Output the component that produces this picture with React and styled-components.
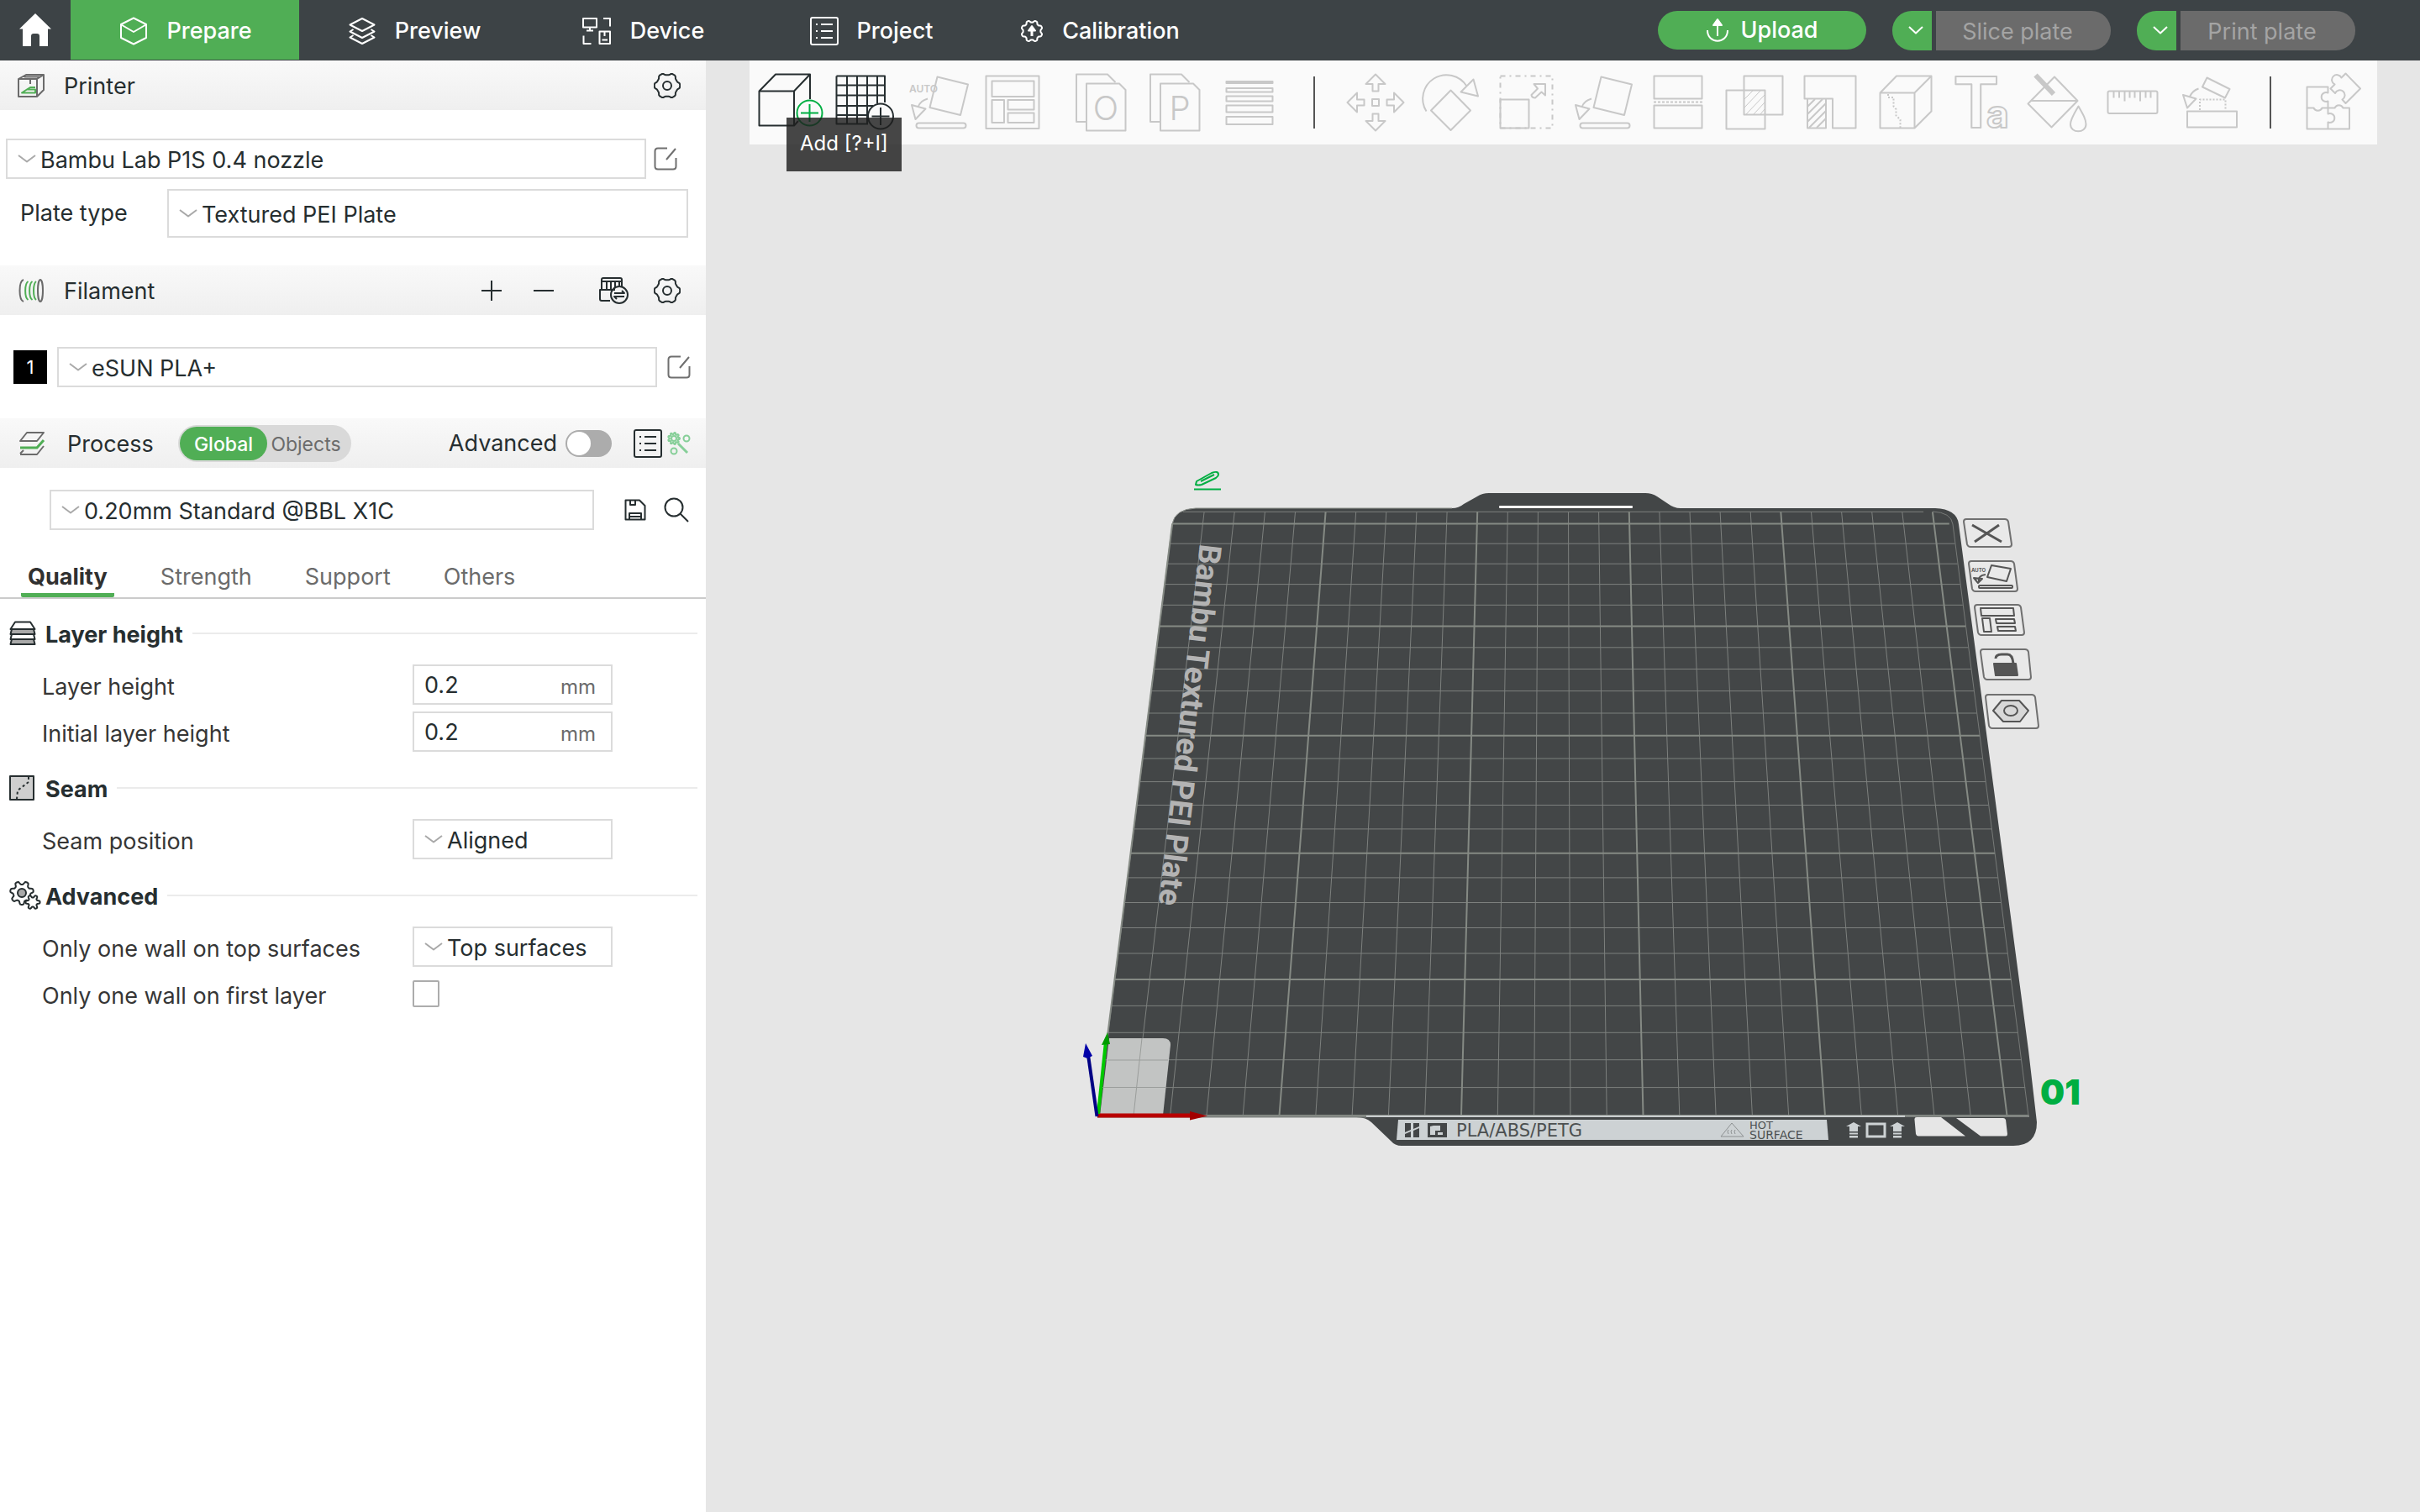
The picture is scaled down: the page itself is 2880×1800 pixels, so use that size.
import React, { useState } from 'react'
import styled, { createGlobalStyle } from 'styled-components'

const GREEN = '#50ae55'
const BRAND = '#00ae42'
const INK = '#262e30'

const gear = (cx, cy, r, depth, lobes, phase = 0) => {
  const points = []
  for (let i = 0; i < 96; i++) {
    const a = (i / 96) * Math.PI * 2
    const wave = Math.tanh(Math.cos(lobes * a + phase) * 2)
    const rr = r + depth * wave
    points.push(`${(cx + rr * Math.cos(a)).toFixed(1)} ${(cy + rr * Math.sin(a)).toFixed(1)}`)
  }
  return `M${points.join('L')}Z`
}

/* ---------- header icons ---------- */

const HomeIcon = () => (
  <svg width="38" height="40" viewBox="0 0 38 40" fill="#fff">
    <path d="M19 0L38 18.5H34V39H24V27q0-3-3-3h-4q-3 0-3 3V39H4V18.5H0Z" />
  </svg>
)
const PrepareIcon = () => (
  <Line width="34" height="34" viewBox="0 0 34 34">
    <path d="M17 1.5L32 9V25L17 32.5L2 25V9Z" />
    <path d="M2.5 9.5L17 18L31.5 9.5" />
  </Line>
)
const PreviewIcon = () => (
  <Line width="34" height="34" viewBox="0 0 34 34">
    <path d="M17 2L31.5 9.5L17 17L2.5 9.5Z" />
    <path d="M6.5 15L2.5 17.5L17 25L31.5 17.5L27.5 15M6.5 22L2.5 24.5L17 32L31.5 24.5L27.5 22" />
  </Line>
)
const DeviceIcon = () => (
  <Line width="36" height="34" viewBox="0 0 36 34">
    <path d="M2 2H18V12.5H2ZM10 12.5V16M6 16.5H14M26 2H34V11.5M2.5 22.5V32H11.5" />
    <path d="M21.5 17.5H34V32H21.5ZM27.5 18V23M24.5 27.5H31" />
  </Line>
)
const ProjectIcon = ({ color }) => (
  <Line width="34" height="34" viewBox="0 0 34 34" color={color}>
    <rect x="1" y="1" width="32" height="32" rx="2" />
    <path d="M7 9H9M7 17H9M7 25H9M13 9H27M13 17H27M13 25H27" />
  </Line>
)
const CalibrationIcon = () => (
  <Line width="28" height="28" viewBox="0 0 28 28">
    <path d={gear(14, 14, 11.5, 1.2, 8, Math.PI)} />
    <path d="M14 8L18 13.5H10Z" fill="#fff" />
    <path d="M14 12V20" strokeWidth="3" />
  </Line>
)
const UploadIcon = () => (
  <Line width="28" height="30" viewBox="0 0 28 30">
    <path d="M14 4V22M2 15C2 32 26 32 26 15" />
    <path d="M14 2L19 9H9Z" fill="#fff" />
  </Line>
)
const SmallChevron = () => (
  <Line width="20" height="12" viewBox="0 0 20 12">
    <path d="M2 2L10 9.5L18 2" />
  </Line>
)

/* ---------- sidebar icons ---------- */

const PrinterIcon = () => (
  <Line width="34" height="30" viewBox="0 0 34 30" color="#6b6b6b">
    <path d="M2 7H24V28H2ZM2 7L11 2H32L24 7M32 2V20L24 28M16 7V13M9 4.5H28" />
    <path d="M6 23.5L12 19.5H22V23.5ZM12 19.5L16 17H22" stroke={GREEN} />
  </Line>
)
const FilamentIcon = () => (
  <Line width="32" height="30" viewBox="-2 0 32 30" color="#6b6b6b">
    <ellipse cx="26" cy="15" rx="3" ry="13" />
    <path d="M6 2C0 4 0 26 6 28" />
    <path d="M11.5 4C7 7 7 23 11.5 26M16.5 4C12 7 12 23 16.5 26M21 4C17 7 17 23 21 26" stroke={GREEN} />
  </Line>
)
const ProcessIcon = () => (
  <Line width="34" height="30" viewBox="-2 0 34 30" color="#6b6b6b">
    <path d="M10 2H30L22 12H2Z" />
    <path d="M2 20H22L30 11" stroke={GREEN} strokeWidth="3" />
    <path d="M2 28H22L30 18M2 27L6 23" />
  </Line>
)
const SettingsIcon = () => (
  <Line width="32" height="32" viewBox="0 0 32 32" color={INK}>
    <path d={gear(16, 16, 14, 1.3, 6)} />
    <circle cx="16" cy="16" r="5" />
  </Line>
)
const PlusIcon = () => (
  <Line width="26" height="26" viewBox="0 0 26 26" color={INK}>
    <path d="M13 1V25M1 13H25" />
  </Line>
)
const MinusIcon = () => (
  <Line width="26" height="26" viewBox="0 0 26 26" color={INK}>
    <path d="M1 13H25" />
  </Line>
)
const AmsIcon = () => (
  <Line width="36" height="34" viewBox="0 0 36 34" color={INK}>
    <path d="M14 29H4Q2 29 2 27V16H20M4 16V4Q4 2 6 2H26Q28 2 28 4V12M4 6H28M10 6V15M15 6V15M20 6V13M25 6V11" />
    <circle cx="25" cy="22" r="10" />
    <path d="M19 20H31L28 17M31 24H19L22 27" />
  </Line>
)
const EditIcon = () => (
  <Line width="28" height="28" viewBox="0 0 28 28" color="#6f6f6f">
    <path d="M16 1.5H5Q1.5 1.5 1.5 5V23Q1.5 26.5 5 26.5H23Q26.5 26.5 26.5 23V13M26 2L15 15" />
  </Line>
)
const SaveIcon = () => (
  <Line width="26" height="26" viewBox="0 0 26 26" color={INK}>
    <path d="M1.5 1.5H18L24.5 8V24.5H1.5ZM7 2V7H13V2M6 24V17H20V24M6 21H20" />
  </Line>
)
const SearchIcon = () => (
  <Line width="30" height="30" viewBox="0 0 30 30" color={INK}>
    <circle cx="12" cy="12" r="10.5" />
    <path d="M19.5 19.5L29 29" />
  </Line>
)
const TuneIcon = () => (
  <Line width="28" height="30" viewBox="0 0 28 30" color="#86cf98">
    <path d={gear(8, 9, 6, 1, 9)} />
    <circle cx="8" cy="9" r="3" />
    <circle cx="23" cy="9" r="3.5" />
    <circle cx="8" cy="24" r="3.5" />
    <path d="M13 15L24 26" strokeWidth="3" />
  </Line>
)
const LayerIcon = () => (
  <Line width="32" height="30" viewBox="0 0 32 30" color={INK}>
    <path d="M7 1.5H25L30.5 10H1.5Z" fill="#fff" />
    <path d="M3 10L1.5 16H30.5L29 10Z" fill="#a9a9a9" />
    <path d="M3 16L1.5 22H30.5L29 16Z" fill="#fff" />
    <path d="M3 22L1.5 28H30.5L29 22Z" fill="#a9a9a9" />
  </Line>
)
const SeamIcon = () => (
  <Line width="30" height="30" viewBox="0 0 30 30" color={INK}>
    <rect x="1" y="1" width="28" height="28" fill="#cfcfcf" />
    <path d="M23 2V8L10 18L9 28" strokeDasharray="3 3" />
  </Line>
)
const AdvancedIcon = () => (
  <Line width="38" height="36" viewBox="0 0 38 36" color={INK}>
    <path d={gear(15, 15, 12, 2, 7, Math.PI / 2)} />
    <circle cx="15" cy="15" r="5" fill="#a9a9a9" />
    <path d={gear(28, 26, 7, 1.6, 6)} fill="#fff" />
  </Line>
)

/* ---------- toolbar icons, each on a 90 x 100 tile ---------- */

const LayFlat = () => (
  <>
    <path d="M43.5 19.5L80 28.5L71 65L34.5 56ZM32 45.5Q23 48 20.5 55.5M13 53L29.5 57.5L17.5 70Z" />
    <rect x="18.5" y="74.5" width="59" height="6" rx="3" />
  </>
)
const Pages = ({ letter }) => (
  <>
    <path d="M27 73H15V16.5H52L61.5 26" />
    <path d="M27 27.5H66L73.5 35V83.5H27Z" />
    <text x="50" y="71" textAnchor="middle" fontSize="40" fontWeight="300" stroke="none" fill="#c8c8c8">{letter}</text>
  </>
)
const moveArrow = 'M45 16.5L56.5 28H48.5V36.5H41.5V28H33.5Z'

const tools = {
  add: {
    label: 'Add',
    active: true,
    art: (
      <>
        <path d="M58 72L53 77.5H11.5V36.5H53V77.5M11.5 36.5L31 16.5H72L53 36.5M72 16.5V46" />
        <g stroke={BRAND}>
          <circle cx="71.5" cy="62.5" r="15" />
          <path d="M61 62.5H82M71.5 52V73" />
        </g>
      </>
    ),
  },
  addPlate: {
    label: 'Add plate',
    active: true,
    art: (
      <>
        <path d="M13.5 18.5H71V50M51 75.5H13.5V18.5M26 18.5V75.5M38 18.5V75.5M50 18.5V75.5M62 18.5V51M13.5 29.5H71M13.5 41.5H71M13.5 54H57M13.5 65H50" />
        <circle cx="66" cy="66.5" r="15" />
        <path d="M55.5 66.5H76.5M66 56V77" />
      </>
    ),
  },
  autoOrient: {
    label: 'Auto orient',
    art: (
      <>
        <text x="10" y="38" fontSize="12" fontWeight="600" stroke="none" fill="#c8c8c8">AUTO</text>
        <LayFlat />
      </>
    ),
  },
  arrange: {
    label: 'Arrange all objects',
    art: <path d="M11.5 18.5H74.5V81H11.5ZM18.5 24.5H68.5V43H18.5ZM18.5 47H33V74H18.5ZM37.5 47H68.5V58.5H37.5ZM37.5 62.5H68.5V74H37.5Z" />,
  },
  toObjects: { label: 'Split to objects', art: <Pages letter="O" /> },
  toParts: { label: 'Split to parts', art: <g transform="translate(-2 0)"><Pages letter="P" /></g> },
  layers: {
    label: 'Variable layer height',
    art: (
      <>
        <rect x="13.5" y="25" width="55" height="2" />
        <path d="M13.5 33H68.5V37.5H13.5ZM13.5 42.5H68.5V48.5H13.5ZM13.5 53.5H68.5V61.5H13.5ZM13.5 67H68.5V76H13.5Z" />
      </>
    ),
  },
  move: {
    label: 'Move',
    art: (
      <>
        {[0, 90, 180, 270].map((a) => <path key={a} d={moveArrow} transform={`rotate(${a} 45 50)`} />)}
        <rect x="41" y="46" width="8" height="8" />
      </>
    ),
  },
  rotate: {
    label: 'Rotate',
    art: <path d="M44.5 35.5L68 59.5L44.5 83L21 59.5ZM15.5 60.5A28 28 0 0 1 63.5 30.5M71.5 22.5L77 42.5L56.5 37.5Z" />,
  },
  scale: {
    label: 'Scale',
    art: (
      <>
        <path d="M13.5 18.5H75.5V80.5H13.5Z" strokeDasharray="6 5 2 5" />
        <path d="M13.5 46.5H47.5V80.5H13.5ZM53.5 28H67V41.5L62.5 37.5L55 44.5Q51 44.5 50.5 41L58 33.5Z" />
      </>
    ),
  },
  lay: { label: 'Lay on face', art: <LayFlat /> },
  cut: {
    label: 'Cut',
    art: (
      <>
        <path d="M16.5 18.5H73.5V45.5H16.5ZM16.5 53.5H73.5V80.5H16.5Z" />
        <path d="M16 49.5H74" strokeDasharray="3 2" />
      </>
    ),
  },
  boolean: {
    label: 'Mesh boolean',
    art: (
      <>
        <path d="M12.5 35.5H58.5V81.5H12.5ZM33.5 18.5H79.5V64.5H33.5Z" />
        <path d="M34 46L44 36M34 56L53 36M36 64L58 41M45 64L58 50M53 64L58 58" strokeWidth="1" />
      </>
    ),
  },
  support: {
    label: 'Support painting',
    art: (
      <>
        <path d="M15.5 18.5H76.5V80.5H49V45.5H15.5ZM19 45.5H41V80.5H19Z" />
        <path d="M19 55L28 46M19 64L37 46M19 73L41 51M21 80L41 60M30 80L41 69" />
      </>
    ),
  },
  seam: {
    label: 'Seam painting',
    art: (
      <>
        <path d="M15.5 38.5H56.5V80.5H15.5ZM15.5 38.5L35 18.5H76.5L56.5 38.5M76.5 18.5V60.5L56.5 80.5" />
        <path d="M25 40V44H31.5V54.5L34.5 58V65.5L39.5 70.5V80" strokeDasharray="2 2" />
      </>
    ),
  },
  text: {
    label: 'Text shape',
    art: (
      <text y="80" fontSize="84" fontWeight="600">
        <tspan x="12">T</tspan>
        <tspan x="52" fontSize="46" fontWeight="700">a</tspan>
      </text>
    ),
  },
  paint: {
    label: 'Color painting',
    art: (
      <>
        <path d="M43 19.5L70.5 48L39.5 79.5L11.5 51.5ZM14.5 48H70.5" />
        <path d="M20.5 17.5L42 40" strokeWidth="6" />
        <path d="M71.5 54.5C66 64 62 70 62 76C62 87 80.5 87 80.5 76C80.5 70 77 64 71.5 54.5Z" />
      </>
    ),
  },
  measure: {
    label: 'Measure',
    art: (
      <>
        <rect x="16.5" y="36.5" width="59" height="26.5" rx="2" />
        <path d="M23.5 37V44.5M30 37V44.5M36.5 37V48.5M42.5 37V44.5M48.5 37V44.5M55 37V48.5M61.5 37V44.5M67.5 37V44.5" />
      </>
    ),
  },
  assemble: {
    label: 'Assemble',
    art: (
      <>
        <path d="M21 60.5H80V79.5H21ZM44.500 20.5L71.500 34L66 44.5L39 31.5ZM34.5 33.5Q27 36 24 43M16 41L31.5 45.5L21 56.5Z" />
        <path d="M36 59V46.5H66.5V59" strokeDasharray="2 2" />
      </>
    ),
  },
  assembly: {
    label: 'Assembly view',
    art: (
      <>
        <path d="M13.5 31.5H38.5V38.5A5.500 5.500 0 1 0 38.5 48.5V56.5H31.5A5.500 5.500 0 0 1 21.5 56.5H13.5Z" />
        <path d="M13.5 56.5V81.5H64V56.5H56.5A5.500 5.500 0 0 0 46.5 56.5H38.5V63.5A5.500 5.500 0 1 1 38.5 73.5V81.5" />
        <path d="M59.5 15.5L77 33.5L59.5 51L55.5 46.5A6 6 0 1 0 47 39L41.5 33.5L46.5 28.5A6 6 0 1 1 54.5 20.5Z" />
      </>
    ),
  },
}

const Tool = ({ id, children }) => {
  const { label, active, art } = tools[id]
  return (
    <ToolButton type="button" aria-label={label} disabled={!active}>
      <ToolArt width="90" height="100" viewBox="0 0 90 100" $active={active}>{art}</ToolArt>
      {children}
    </ToolButton>
  )
}

/* ---------- build plate ---------- */

// projects a point of the bed (mm) onto the scene
const project = (x, y) => {
  const w = 1 + 0.000777 * y
  return [(1306 + 4.33 * x + 1.441 * y) / w, (1328 - 2.334 * y) / w]
}
const gridLine = (x1, y1, x2, y2) => {
  const [ax, ay] = project(x1, y1)
  const [bx, by] = project(x2, y2)
  return `M${ax.toFixed(1)} ${ay.toFixed(1)}L${bx.toFixed(1)} ${by.toFixed(1)}`
}
const BED = 256
const steps = Array.from({ length: 26 }, (_, i) => i * 10)
const thin = steps.filter((s) => s % 50 !== 0)
const bold = steps.filter((s) => s % 50 === 0)
const gridPath = (list) => list.map((s) => gridLine(s, 0, s, BED - (s === 0 ? 6 : 0)) + gridLine(0, s, s === 250 ? 255 : BED, s)).join('')

const PlateDrawing = () => (
  <SceneArt viewBox="1230 550 1260 872" role="img" aria-label="Textured PEI plate">
    <path
      fill="#434647"
      d="M1306 1330L1395 624Q1398 606 1423 605H1728Q1736 605 1742 600L1758 591Q1764 587 1772 587H1958Q1966 587 1972 591L1984 599Q1992 605 2000 605H2303Q2329 606 2331 624L2414 1250L2424 1336Q2424 1364 2396 1364H1668Q1660 1364 1655 1358L1632 1336Q1626 1330 1614 1330Z"
    />
    <path d="M1306 1330L1395 624Q1398 606 1423 605H1728" fill="none" stroke="#8e928d" />
    <path d={gridPath(thin) + gridLine(3, BED, 247, BED)} fill="none" stroke="#7d807e" />
    <path d={gridPath(bold)} fill="none" stroke="#858a84" strokeWidth="2" />
    <path d="M2300 609Q2322 610 2324 624L2414 1328" fill="none" stroke="#777a78" />
    <rect x="1784" y="602" width="159" height="3" rx="1" fill="#f4f4f4" />

    <PlateName transform="translate(1428 647) rotate(96.5)">Bambu Textured PEI Plate</PlateName>

    <path d="M1320 1236H1384Q1393 1236 1393 1244L1384 1328H1309Z" fill="#c2c4c3" />
    <path d="M1359 1236L1349 1328M1318 1262H1390M1312 1294.5H1387" fill="none" stroke="#9a9d9b" />

    <path d="M1626 1329H2267" stroke="#c9cdce" strokeWidth="2" />
    <path d="M1306 1329.5H1626M2267 1329H2415" stroke="#7f8380" strokeWidth="2" />
    <path d="M1664 1333H2174L2176 1357H1662Z" fill="#cdd2d4" />
    <path d="M1672 1337H1679V1345L1672 1348ZM1682 1337H1689V1341L1682 1344ZM1672 1350L1679 1347V1354H1672ZM1682 1346L1689 1343V1354H1682Z" fill="#434647" />
    <path d="M1699 1337H1722V1354H1699ZM1702 1341V1351H1708V1346H1714V1340H1706ZM1711 1348V1351H1717V1348Z" fill="#434647" fillRule="evenodd" />
    <PlateNote x="1733" y="1353" $size={21}>PLA/ABS/PETG</PlateNote>
    <path d="M2061 1337L2075 1353H2048ZM2057 1350Q2055 1347 2057 1345M2061 1350Q2059 1347 2061 1345M2065 1350Q2063 1347 2065 1345" fill="none" stroke="#8d9192" />
    <PlateNote x="2082" y="1344" $size={13}>HOT</PlateNote>
    <PlateNote x="2082" y="1356" $size={14}>SURFACE</PlateNote>
    {[2197, 2249].map((x) => (
      <path key={x} fill="#cdd2d4" d={`M${x + 9} 1336L${x + 18} 1341H${x + 14}V1347H${x + 4}V1341H${x}ZM${x + 4} 1348.5H${x + 14}V1350.5H${x + 4}ZM${x + 4} 1352H${x + 14}V1354.5H${x + 4}Z`} />
    ))}
    <rect x="2222" y="1338" width="21" height="15" fill="none" stroke="#cdd2d4" strokeWidth="3" />
    <path d="M2281 1330H2310L2339 1352.5H2283Q2281 1352.5 2280 1350L2278.5 1333Q2278 1330 2281 1330ZM2328 1331H2384Q2386 1331 2387 1333L2389 1350Q2389 1352.5 2387 1352.5H2357Z" fill="#e6e6e6" />

    <path d="M1306 1328H1418" stroke="#b80000" strokeWidth="5" />
    <path d="M1437 1328.5L1416 1323V1333.5Z" fill="#a30000" />
    <path d="M1307 1326L1316 1240" stroke="#00c800" strokeWidth="4" />
    <path d="M1318 1229L1321 1243L1311 1244Z" fill="#009a00" />
    <path d="M1305.5 1329L1295 1256" stroke="#000084" strokeWidth="4" />
    <path d="M1292 1242L1300 1257L1294 1260L1289 1258Z" fill="#0000a8" />

    <PlateNumber x="2428" y="1315">01</PlateNumber>
  </SceneArt>
)

const plateActions = [
  {
    label: 'Remove plate', left: 1104, top: 65, width: 62, height: 40,
    frame: 'M6 3H52Q55 3 56 6L60 33Q60 36 57 36H11Q8 36 7 33L3 6Q3 3 6 3Z',
    art: <path d="M13 10L48 30M45 10L16 30" strokeWidth="3" />,
  },
  {
    label: 'Auto orient plate', left: 1111, top: 115, width: 62, height: 42,
    frame: 'M5 3H52Q55 3 56 6L60 36Q60 39 57 39H10Q7 39 6 36L2 6Q2 3 5 3Z',
    art: (
      <>
        <path d="M29 8L52 12L47 27L24 22Z" />
        <path d="M22 19Q13 20 14 27M8 23L13 29L18 24Z" />
        <rect x="14" y="32" width="40" height="3" rx="1" />
        <text x="5" y="16" fontSize="6" fontWeight="700" stroke="none" fill="#555">AUTO</text>
      </>
    ),
  },
  {
    label: 'Arrange plate', left: 1118, top: 167, width: 62, height: 42,
    frame: 'M5 3H53Q56 3 57 6L61 36Q61 39 58 39H10Q7 39 6 36L2 6Q2 3 5 3Z',
    art: <path d="M9 7H48L49 16H10ZM11 19H20L22 35H13ZM27 20H49L50 25H28ZM29 29H50L51 34H30Z" />,
  },
  {
    label: 'Lock plate', left: 1125, top: 219, width: 64, height: 44,
    frame: 'M5 4H55Q58 4 59 7L62 37Q62 40 59 40H10Q7 40 6 37L2 7Q2 4 5 4Z',
    art: (
      <>
        <path d="M18 21H44L46 35H20Z" fill="#555" />
        <path d="M20 15Q20 10 27 10H34Q40 10 41 21" strokeWidth="3" />
      </>
    ),
  },
  {
    label: 'Plate settings', left: 1130, top: 273, width: 68, height: 48,
    frame: 'M6 4H58Q61 4 62 7L66 41Q66 44 63 44H11Q8 44 7 41L3 7Q3 4 6 4Z',
    art: (
      <>
        <path d="M22 11H43L54 23L44 36H24L12 23Z" fill="#d8d8d8" />
        <ellipse cx="33" cy="23" rx="8" ry="6" />
      </>
    ),
  },
]

/* ---------- small shared pieces ---------- */

const Combo = ({ id, label, value, tall }) => (
  <ComboBox>
    <ComboChevron width="24" height="12" viewBox="0 0 24 12" color="#a9a9a9">
      <path d="M2 2L12 9.5L22 2" />
    </ComboChevron>
    <Select id={id} aria-label={label} defaultValue={value} $tall={tall}>
      <option>{value}</option>
    </Select>
  </ComboBox>
)

const Heading = ({ icon, title }) => (
  <SectionHeading>
    <SectionIcon>{icon}</SectionIcon>
    <h3>{title}</h3>
    <hr />
  </SectionHeading>
)

const mainTabs = [
  ['Prepare', <PrepareIcon />],
  ['Preview', <PreviewIcon />],
  ['Device', <DeviceIcon />],
  ['Project', <ProjectIcon />],
  ['Calibration', <CalibrationIcon />],
]
const settingTabs = ['Quality', 'Strength', 'Support', 'Others']

function App() {
  const [view, setView] = useState('Prepare')
  const [tab, setTab] = useState('Quality')
  const [scope, setScope] = useState('Global')

  return (
    <Page>
      <GlobalStyle />
      <Header>
        <HomeButton type="button" aria-label="Home"><HomeIcon /></HomeButton>
        <MainTabs>
          {mainTabs.map(([name, icon]) => (
            <MainTab key={name} type="button" $active={view === name} onClick={() => setView(name)}>
              {icon}
              {name}
            </MainTab>
          ))}
        </MainTabs>
        <HeaderActions>
          <UploadButton type="button"><UploadIcon />Upload</UploadButton>
          <SplitButton>
            <SplitToggle type="button" aria-label="Slice options"><SmallChevron /></SplitToggle>
            <SplitMain type="button" disabled>Slice plate</SplitMain>
          </SplitButton>
          <SplitButton>
            <SplitToggle type="button" aria-label="Print options"><SmallChevron /></SplitToggle>
            <SplitMain type="button" disabled>Print plate</SplitMain>
          </SplitButton>
        </HeaderActions>
      </Header>

      <Body>
        <Sidebar>
          <PanelHeader>
            <PanelIcon><PrinterIcon /></PanelIcon>
            <PanelTitle>Printer</PanelTitle>
            <IconButton type="button" aria-label="Printer settings"><SettingsIcon /></IconButton>
          </PanelHeader>
          <PrinterBody>
            <PrinterRow>
              <Combo label="Printer" value="Bambu Lab P1S 0.4 nozzle" />
              <IconButton type="button" aria-label="Edit printer"><EditIcon /></IconButton>
            </PrinterRow>
            <PlateRow>
              <label htmlFor="plate-type">Plate type</label>
              <Combo id="plate-type" value="Textured PEI Plate" tall />
            </PlateRow>
          </PrinterBody>

          <PanelHeader>
            <PanelIcon><FilamentIcon /></PanelIcon>
            <PanelTitle>Filament</PanelTitle>
            <FilamentActions>
              <IconButton type="button" aria-label="Add filament"><PlusIcon /></IconButton>
              <IconButton type="button" aria-label="Remove filament"><MinusIcon /></IconButton>
            </FilamentActions>
            <IconButton type="button" aria-label="Sync filaments"><AmsIcon /></IconButton>
            <IconButton type="button" aria-label="Filament settings"><SettingsIcon /></IconButton>
          </PanelHeader>
          <FilamentRow>
            <Swatch type="button">1</Swatch>
            <Combo label="Filament" value="eSUN PLA+" />
            <IconButton type="button" aria-label="Edit filament"><EditIcon /></IconButton>
          </FilamentRow>

          <PanelHeader>
            <PanelIcon $wide><ProcessIcon /></PanelIcon>
            <PanelTitle $fixed>Process</PanelTitle>
            <Scope>
              {['Global', 'Objects'].map((name) => (
                <ScopeButton key={name} type="button" $active={scope === name} onClick={() => setScope(name)}>{name}</ScopeButton>
              ))}
            </Scope>
            <AdvancedLabel>
              Advanced
              <Switch type="checkbox" role="switch" />
            </AdvancedLabel>
            <ProcessTools>
              <IconButton type="button" aria-label="Parameter list"><ProjectIcon color={INK} /></IconButton>
              <IconButton type="button" aria-label="Compare presets"><TuneIcon /></IconButton>
            </ProcessTools>
          </PanelHeader>
          <PresetRow>
            <Combo label="Process preset" value="0.20mm Standard @BBL X1C" />
            <PresetActions>
              <IconButton type="button" aria-label="Save preset"><SaveIcon /></IconButton>
              <IconButton type="button" aria-label="Search settings"><SearchIcon /></IconButton>
            </PresetActions>
          </PresetRow>

          <SettingTabs>
            {settingTabs.map((name) => (
              <SettingTab key={name} type="button" $active={tab === name} onClick={() => setTab(name)}>{name}</SettingTab>
            ))}
          </SettingTabs>

          <Section>
            <Heading icon={<LayerIcon />} title="Layer height" />
            <Field>
              <label htmlFor="layer-height">Layer height</label>
              <NumberBox><input id="layer-height" defaultValue="0.2" /><span>mm</span></NumberBox>
            </Field>
            <Field>
              <label htmlFor="initial-layer-height">Initial layer height</label>
              <NumberBox><input id="initial-layer-height" defaultValue="0.2" /><span>mm</span></NumberBox>
            </Field>
          </Section>
          <Section>
            <Heading icon={<SeamIcon />} title="Seam" />
            <Field>
              <label htmlFor="seam-position">Seam position</label>
              <Combo id="seam-position" value="Aligned" />
            </Field>
          </Section>
          <Section>
            <Heading icon={<AdvancedIcon />} title="Advanced" />
            <Field>
              <label htmlFor="one-wall-top">Only one wall on top surfaces</label>
              <Combo id="one-wall-top" value="Top surfaces" />
            </Field>
            <Field>
              <label htmlFor="one-wall-first">Only one wall on first layer</label>
              <CheckBox id="one-wall-first" type="checkbox" />
            </Field>
          </Section>
        </Sidebar>

        <Workspace>
          <Toolbar>
            <ToolGroup>
              <Tool id="add"><Tooltip role="tooltip">Add [?+I]</Tooltip></Tool>
              {['addPlate', 'autoOrient', 'arrange'].map((id) => <Tool key={id} id={id} />)}
            </ToolGroup>
            <ToolGroup $spaced>
              {['toObjects', 'toParts', 'layers'].map((id) => <Tool key={id} id={id} />)}
            </ToolGroup>
            <Divider $gap={27} />
            <ToolGroup>
              {['move', 'rotate', 'scale', 'lay', 'cut', 'boolean', 'support', 'seam', 'text', 'paint', 'measure', 'assemble'].map((id) => (
                <Tool key={id} id={id} />
              ))}
            </ToolGroup>
            <Divider $gap={29} />
            <ToolGroup><Tool id="assembly" /></ToolGroup>
          </Toolbar>
          <Stage>
            <Scene>
              <PlateDrawing />
              <PlateAction type="button" aria-label="Rename plate" $left={190} $top={9}>
                <Line width="36" height="26" viewBox="0 0 36 26" color={BRAND}>
                  <path d="M3 18L4 14L22 4Q30 1 30 6Q30 8 27 10L10 18Q6 19 3 18ZM9 14L25 6M1 23.5H33" />
                </Line>
              </PlateAction>
              {plateActions.map(({ label, left, top, width, height, frame, art }) => (
                <PlateAction key={label} type="button" aria-label={label} $left={left} $top={top}>
                  <Line width={width} height={height} viewBox={`0 0 ${width} ${height}`} color="#555">
                    <path d={frame} stroke="#707070" fill="#e9e9e9" />
                    {art}
                  </Line>
                </PlateAction>
              ))}
            </Scene>
          </Stage>
        </Workspace>
      </Body>
    </Page>
  )
}

export default App

const GlobalStyle = createGlobalStyle`
  *, *::before, *::after {
    box-sizing: border-box;
  }
  body {
    margin: 0;
  }
  body, button, input, select {
    color: ${INK};
    font-family: Inter, 'Liberation Sans', sans-serif;
    font-size: 27px;
    line-height: 32px;
  }
  button {
    background: none;
    border: 0;
    cursor: pointer;
    padding: 0;
  }
  svg {
    display: block;
    flex: none;
  }
`
const Line = styled.svg`
  fill: none;
  stroke: ${props => props.color || '#fff'};
  stroke-linejoin: round;
  stroke-width: 2px;
`
const Page = styled.div`
  display: flex;
  flex-direction: column;
  min-height: 100vh;
`
const Header = styled.header`
  align-items: stretch;
  background: #3d4346;
  display: flex;
  height: 72px;
  padding-right: 77px;
`
const HomeButton = styled.button`
  align-items: center;
  display: flex;
  justify-content: center;
  width: 84px;
`
const MainTabs = styled.nav`
  display: flex;
`
const MainTab = styled.button`
  align-items: center;
  background: ${props => props.$active ? GREEN : 'transparent'};
  border-bottom: 1px solid #3d4346;
  color: #fff;
  display: flex;
  font-weight: 500;
  gap: 22px;
  justify-content: center;
  padding: 2px 0 0 2px;
  width: 272px;
`
const HeaderActions = styled.div`
  align-items: center;
  display: flex;
  gap: 31px;
  margin-left: auto;
`
const UploadButton = styled.button`
  align-items: center;
  background: ${GREEN};
  border-radius: 23px;
  color: #fff;
  display: flex;
  font-weight: 500;
  gap: 13px;
  height: 46px;
  justify-content: center;
  width: 248px;
`
const SplitButton = styled.div`
  display: flex;
  gap: 5px;
  height: 47px;
`
const SplitToggle = styled.button`
  align-items: center;
  background: ${GREEN};
  border-radius: 23px 0 0 23px;
  display: flex;
  justify-content: center;
  padding-left: 8px;
  width: 47px;
`
const SplitMain = styled.button`
  background: #6b6b6b;
  border-radius: 0 23px 23px 0;
  color: #a4a4a4;
  padding: 4px 14px 0 0;
  width: 208px;
`
const Body = styled.div`
  display: flex;
  flex: 1;
`
const Sidebar = styled.aside`
  background: #fff;
  flex: none;
  width: 840px;
`
const PanelHeader = styled.div`
  align-items: center;
  background: linear-gradient(#f9f9f9, #efefef);
  display: flex;
  height: 59px;
  padding: 0 30px 0 20px;
`
const PanelIcon = styled.span`
  display: flex;
  width: ${props => props.$wide ? 60 : 56}px;
`
const PanelTitle = styled.h2`
  flex: ${props => props.$fixed ? '0 0 132px' : '1'};
  font-size: inherit;
  font-weight: 400;
  margin: 0;
  padding-top: 2px;
`
const IconButton = styled.button`
  display: flex;
  flex: none;
`
const FilamentActions = styled.div`
  display: flex;
  gap: 36px;
  margin-right: 52px;

  & + button {
    margin-right: 30px;
  }
`
const PrinterBody = styled.div`
  display: flex;
  flex-direction: column;
  gap: 12px;
  padding: 34px 0 33px;
`
const PrinterRow = styled.div`
  align-items: center;
  display: flex;
  gap: 9px;
  padding: 0 34px 0 7px;
`
const PlateRow = styled.div`
  align-items: center;
  display: flex;
  padding: 0 21px 0 24px;

  label {
    flex: 0 0 175px;
  }
`
const FilamentRow = styled.div`
  align-items: center;
  display: flex;
  gap: 12px;
  padding: 38px 18px 37px 16px;
`
const Swatch = styled.button`
  background: #000;
  color: #fff;
  font-size: 22px;
  height: 40px;
  width: 40px;
`
const Scope = styled.div`
  background: #d9d9d9;
  border-radius: 22px;
  display: flex;
  height: 44px;
  padding: 2px;
  width: 206px;
`
const ScopeButton = styled.button`
  background: ${props => props.$active ? GREEN : 'transparent'};
  border-radius: 20px;
  color: ${props => props.$active ? '#fff' : '#6b6b6b'};
  flex: none;
  font-size: 23px;
  font-weight: ${props => props.$active ? 500 : 400};
  padding-top: 2px;
  width: ${props => props.$active ? 104 : 92}px;
`
const AdvancedLabel = styled.label`
  align-items: center;
  display: flex;
  gap: 10px;
  margin-left: auto;
`
const Switch = styled.input`
  appearance: none;
  background: #acacac;
  border-radius: 16px;
  height: 32px;
  margin: 0;
  padding: 2px;
  width: 55px;

  &::before {
    background: #fff;
    border-radius: 50%;
    content: '';
    display: block;
    height: 28px;
    width: 28px;
  }
  &:checked {
    background: ${GREEN};
  }
  &:checked::before {
    margin-left: auto;
  }
`
const ProcessTools = styled.div`
  align-items: center;
  display: flex;
  gap: 6px;
  margin: 0 -12px 0 26px;
`
const PresetRow = styled.div`
  align-items: center;
  display: flex;
  gap: 36px;
  padding: 26px 20px 0 59px;
`
const PresetActions = styled.div`
  align-items: center;
  display: flex;
  gap: 21px;
`
const ComboBox = styled.div`
  flex: 1;
  position: relative;
`
const ComboChevron = styled(Line)`
  left: 13px;
  pointer-events: none;
  position: absolute;
  top: 50%;
  transform: translateY(-50%);
`
const Select = styled.select`
  appearance: none;
  background: transparent;
  border: 2px solid #dbdbdb;
  border-radius: 0;
  display: block;
  height: ${props => props.$tall ? 58 : 48}px;
  padding: 3px 8px 0 39px;
  width: 100%;
`
const SettingTabs = styled.div`
  border-bottom: 2px solid #cbcbcb;
  display: flex;
  gap: 47px;
  height: 82px;
  padding: 36px 0 0 25px;
`
const SettingTab = styled.button`
  border-bottom: 5px solid ${props => props.$active ? GREEN : 'transparent'};
  border-radius: 2px;
  color: ${props => props.$active ? '#303030' : '#6b6b6b'};
  font-weight: ${props => props.$active ? 700 : 400};
  padding: 0 8px;
  white-space: nowrap;
`
const Section = styled.section`
  padding-bottom: 2px;
`
const SectionHeading = styled.div`
  align-items: center;
  display: flex;
  height: 78px;
  padding: 4px 10px 0 11px;

  h3 {
    font-size: inherit;
    font-weight: 700;
    margin: 0;
    padding-top: 4px;
  }
  hr {
    border: 0;
    border-top: 2px solid #ebebeb;
    flex: 1;
    margin: 0 0 0 11px;
  }
`
const SectionIcon = styled.span`
  display: flex;
  margin-right: 4px;
  min-width: 39px;
`
const Field = styled.div`
  align-items: center;
  display: grid;
  grid-template-columns: 441px 238px;
  min-height: 48px;
  padding-left: 50px;

  & + & {
    margin-top: 8px;
  }
  label {
    color: #363636;
    padding-top: 5px;
  }
`
const NumberBox = styled.div`
  align-items: center;
  border: 2px solid #dbdbdb;
  display: flex;
  height: 48px;
  padding: 0 18px 0 12px;

  input {
    border: 0;
    flex: 1;
    min-width: 0;
    outline: 0;
    padding: 2px 0 0;
  }
  span {
    color: #6b6b6b;
    font-size: 24px;
    padding-top: 6px;
  }
`
const CheckBox = styled.input`
  appearance: none;
  background: #fff;
  border: 2px solid #acacac;
  border-radius: 2px;
  height: 32px;
  margin: 0;
  width: 32px;

  &:checked {
    background: ${GREEN};
  }
`
const Workspace = styled.main`
  background: #e6e6e6;
  display: flex;
  flex: 1;
  flex-direction: column;
  min-width: 0;
`
const Toolbar = styled.div`
  align-items: center;
  background: #fafafa;
  display: flex;
  height: 100px;
  margin: 0 51px 0 52px;
`
const ToolGroup = styled.div`
  display: flex;
  margin-left: ${props => props.$spaced ? 14 : 0}px;
`
const ToolButton = styled.button`
  position: relative;
`
const ToolArt = styled.svg`
  fill: none;
  stroke: ${props => props.$active ? INK : '#c8c8c8'};
  stroke-linejoin: round;
  stroke-width: 2px;
`
const Divider = styled.span`
  background: #555;
  height: 62px;
  margin: 0 ${props => props.$gap}px;
  width: 2px;
`
const Tooltip = styled.span`
  background: rgba(30, 30, 30, .82);
  color: #fff;
  font-size: 24px;
  height: 64px;
  left: 44px;
  padding: 15px 16px;
  position: absolute;
  top: 68px;
  white-space: nowrap;
  z-index: 2;
`
const Stage = styled.div`
  align-items: center;
  display: flex;
  flex: 1;
  justify-content: center;
  overflow: hidden;
`
const Scene = styled.div`
  flex: none;
  position: relative;
  width: 1260px;
`
const SceneArt = styled.svg`
  width: 100%;
`
const PlateAction = styled.button`
  left: ${props => props.$left}px;
  position: absolute;
  top: ${props => props.$top}px;
`
const PlateName = styled.text`
  fill: #b3b3b3;
  font-family: 'Liberation Sans Narrow', Roboto, sans-serif;
  font-size: 37px;
  font-weight: 700;
`
const PlateNote = styled.text`
  fill: #4c5051;
  font-family: 'DejaVu Sans', sans-serif;
  font-size: ${props => props.$size}px;
`
const PlateNumber = styled.text`
  fill: ${BRAND};
  font-size: 41px;
  font-weight: 900;
`
